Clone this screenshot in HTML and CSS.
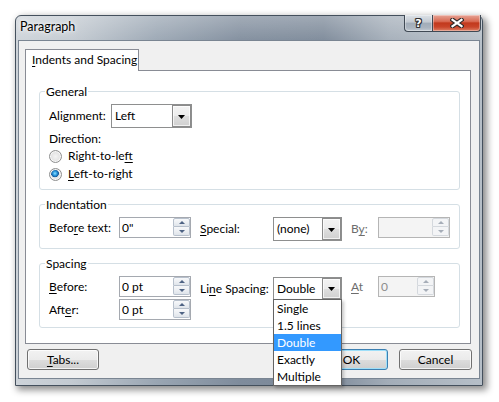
FILE: index.html
```html
<!DOCTYPE html>
<html lang="en">
<head>
<meta charset="utf-8">
<title>Paragraph</title>
<link rel="stylesheet" href="styles.css">
</head>
<body>
<div class="window">
  <div class="titlebar">
    <span class="title">Paragraph</span>
    <div class="caption">
      <div class="cap-btn help"><span class="help-glyph">?</span></div>
      <div class="cap-btn close">
        <svg width="14" height="10" viewBox="0 0 14 10" aria-hidden="true">
          <path d="M2.5 1.8 L11.5 8.2 M11.5 1.8 L2.5 8.2" stroke="#2e2a2a" stroke-width="4.4" stroke-linecap="square" fill="none"/>
          <path d="M2.5 1.8 L11.5 8.2 M11.5 1.8 L2.5 8.2" stroke="#ffffff" stroke-width="2.2" stroke-linecap="square" fill="none"/>
        </svg>
      </div>
    </div>
  </div>
  <div class="client">
    <div class="tabs">
      <div class="tab"><u>I</u>ndents and Spacing</div>
    </div>
    <div class="panel">
      <div class="group general">
        <div class="group-title">General</div>
        <div class="row row-align">
          <span class="lbl lbl-align combo-lbl">Alignment:</span>
          <div class="combo combo-align">
            <span class="combo-value">Left</span>
            <span class="combo-btn"><svg width="7" height="4" viewBox="0 0 7 4"><polygon points="0,0 7,0 3.5,4" fill="#000"/></svg></span>
          </div>
        </div>
        <div class="subhead">Direction:</div>
        <div class="radio-row"><span class="radio"></span><span>Right-to-le<u>f</u>t</span></div>
        <div class="radio-row"><span class="radio checked"></span><span><u>L</u>eft-to-right</span></div>
      </div>

      <div class="group indentation">
        <div class="group-title">Indentation</div>
        <div class="row row-indent">
          <span class="lbl lbl-first spin-lbl">Befo<u>r</u>e text:</span>
          <div class="spin spin-wide">
            <span class="spin-text">0"</span>
            <span class="spin-btns"><span class="sb up"><i></i></span><span class="sb down"><i></i></span></span>
          </div>
          <span class="lbl lbl-mid combo-lbl"><u>S</u>pecial:</span>
          <div class="combo combo-small">
            <span class="combo-value">(none)</span>
            <span class="combo-btn"><svg width="7" height="4" viewBox="0 0 7 4"><polygon points="0,0 7,0 3.5,4" fill="#000"/></svg></span>
          </div>
          <span class="lbl lbl-short combo-lbl disabled">B<u>y</u>:</span>
          <div class="spin spin-wide disabled">
            <span class="spin-text"></span>
            <span class="spin-btns"><span class="sb up"><i></i></span><span class="sb down"><i></i></span></span>
          </div>
        </div>
      </div>

      <div class="group spacing">
        <div class="group-title">Spacing</div>
        <div class="row row-before">
          <span class="lbl lbl-first spin-lbl"><u>B</u>efore:</span>
          <div class="spin spin-wide">
            <span class="spin-text">0 pt</span>
            <span class="spin-btns"><span class="sb up"><i></i></span><span class="sb down"><i></i></span></span>
          </div>
          <span class="lbl lbl-mid combo-lbl ls-lbl">Li<u>n</u>e Spacing:</span>
          <div class="combo combo-small combo-ls">
            <span class="combo-value">Double</span>
            <span class="combo-btn"><svg width="7" height="4" viewBox="0 0 7 4"><polygon points="0,0 7,0 3.5,4" fill="#000"/></svg></span>
            <ul class="dropdown">
              <li>Single</li>
              <li>1.5 lines</li>
              <li class="selected">Double</li>
              <li>Exactly</li>
              <li>Multiple</li>
            </ul>
          </div>
          <span class="lbl lbl-short spin-lbl disabled"><u>A</u>t</span>
          <div class="spin spin-narrow disabled">
            <span class="spin-text">0</span>
            <span class="spin-btns"><span class="sb up"><i></i></span><span class="sb down"><i></i></span></span>
          </div>
        </div>
        <div class="row row-after">
          <span class="lbl lbl-first spin-lbl">Aft<u>e</u>r:</span>
          <div class="spin spin-wide">
            <span class="spin-text">0 pt</span>
            <span class="spin-btns"><span class="sb up"><i></i></span><span class="sb down"><i></i></span></span>
          </div>
        </div>
      </div>
    </div>
    <div class="buttons">
      <div class="btn btn-tabs"><u>T</u>abs...</div>
      <div class="btn btn-ok default">OK</div>
      <div class="btn btn-cancel">Cancel</div>
    </div>
  </div>
</div>
</body>
</html>
```
FILE: styles.css
```css
* { box-sizing: border-box; }
html, body { margin: 0; padding: 0; }
body {
  width: 499px;
  height: 402px;
  overflow: hidden;
  background: #ffffff;
  font-family: "Segoe UI", Lato, "Open Sans", sans-serif;
  font-size: 12px;
  color: #000;
}
u { text-decoration: underline; text-underline-offset: 2px; }

/* window frame */
.window {
  margin: 15px 0 0 15px;
  width: 468px;
  height: 371px;
  border: 1px solid #44505d;
  border-radius: 6px 6px 0 0;
  padding: 0 2px 6px 2px;
  display: flex;
  flex-direction: column;
  background:
    linear-gradient(to bottom, rgba(255,255,255,0.28) 0px, rgba(255,255,255,0.05) 24px, rgba(255,255,255,0) 40px),
    linear-gradient(to right, #cdd3d9 0%, #c3cad1 12%, #9aa6b3 30%, #7f8c9c 48%, #7b8898 66%, #a3adb8 80%, #b6bfc8 100%);
  box-shadow: 3px 3px 7px 1px rgba(0,0,0,0.45);
}
.titlebar {
  height: 24px;
  flex: none;
  display: flex;
  justify-content: space-between;
  align-items: flex-start;
}
.title {
  font-size: 12.5px;
  line-height: 22px;
  padding-left: 2px;
  text-shadow: 0 0 6px #ffffff, 0 0 3px #ffffff;
}
.caption {
  display: flex;
  margin-top: -1px;
  margin-right: -1px;
}
.cap-btn {
  height: 17px;
  border: 1px solid #3f4954;
  border-top: none;
  display: flex;
  align-items: center;
  justify-content: center;
  box-shadow: inset 0 0 0 1px rgba(255,255,255,0.35);
}
.help {
  width: 28px;
  border-right: none;
  border-radius: 0 0 0 4px;
  background: linear-gradient(to bottom, #dde2e7 0%, #c2c9d1 45%, #a1acb8 50%, #aab4bf 80%, #c3cbd3 100%);
}
.help-glyph {
  font-family: "DejaVu Sans", sans-serif;
  font-weight: bold;
  font-size: 11px;
  line-height: 11px;
  color: #fff;
  text-shadow: 1px 0 0 #333, -1px 0 0 #333, 0 1px 0 #333, 0 -1px 0 #333, 1px 1px 0 #333, -1px -1px 0 #333, 1px -1px 0 #333, -1px 1px 0 #333;
}
.close {
  width: 49px;
  border-radius: 0 0 4px 0;
  background: linear-gradient(to bottom, #e7a597 0%, #d86a53 40%, #c2391d 50%, #c9452a 75%, #de8166 100%);
}
.close svg { display: block; }

/* client area */
.client {
  flex: 1;
  border: 1px solid #7a8592;
  background: #f0f0f0;
  padding: 8px 8px 0 6px;
  display: flex;
  flex-direction: column;
}
.tabs { display: flex; height: 21px; flex: none; }
.tab {
  position: relative;
  z-index: 1;
  width: 114px;
  height: 22px;
  border: 1px solid #898c95;
  border-bottom: none;
  background: #fff;
  padding-left: 6px;
  line-height: 20px;
  white-space: nowrap;
}
.panel {
  height: 274px;
  flex: none;
  border: 1px solid #898c95;
  background: #fff;
  padding: 20px 10px 0 13px;
}

/* group boxes */
.group {
  border: 1px solid #d5dfe5;
  border-radius: 3px;
  padding: 0 0 0 9px;
}
.group-title {
  width: max-content;
  margin: -8px 0 0 -4px;
  padding: 0 1px;
  background: #fff;
  line-height: 15px;
}
.general { height: 99px; }
.indentation { margin-top: 14px; height: 45px; }
.spacing { margin-top: 14px; height: 65px; }

.row { display: flex; align-items: flex-start; }
.row-align { margin-top: 5px; height: 24px; }
.row-indent { margin-top: 5px; height: 24px; }
.row-before { margin-top: 5px; height: 23px; }
.row-after { height: 21px; }

.lbl { white-space: nowrap; flex: none; }
.spin-lbl { line-height: 21px; }
.combo-lbl { line-height: 24px; }
.ls-lbl { line-height: 23px; margin-top: 1px; }
.lbl-align { width: 62px; }
.lbl-first { width: 70px; }
.lbl-mid { width: 73px; margin-left: 9px; }
.lbl-short { width: 27px; margin-left: 9px; }
.lbl.disabled { color: #6d6d6d; }

.subhead { margin-top: 3px; line-height: 15px; }
.radio-row {
  display: flex;
  align-items: center;
  height: 18px;
  line-height: 18px;
}
.subhead + .radio-row { margin-top: 1px; }
.radio {
  width: 13px;
  height: 13px;
  border-radius: 50%;
  margin-right: 6px;
  border: 1px solid #8e8f8f;
  background: radial-gradient(circle at 50% 50%, #f4f4f4 0%, #e4e4e4 55%, #d2d2d2 100%);
  box-shadow: inset 0 0 0 1px #f8f8f8;
  flex: none;
}
.radio.checked {
  background:
    radial-gradient(circle at 45% 40%, #8fe1ff 0px, #2b9ae0 2px, #155a9a 3.6px, rgba(0,0,0,0) 4.2px),
    radial-gradient(circle at 50% 50%, #f4f4f4 0%, #e4e4e4 55%, #d2d2d2 100%);
}

/* combo box */
.combo {
  display: flex;
  height: 24px;
  border: 1px solid #8e8f8f;
  background: #fff;
  flex: none;
}
.combo-align { width: 81px; }
.combo-small { width: 69px; }
.combo-ls { height: 23px; margin-top: 1px; position: relative; }
.combo-value { flex: 1; padding-left: 3px; line-height: 22px; white-space: nowrap; }
.combo-ls .combo-value { line-height: 21px; }
.combo-btn {
  width: 19px;
  flex: none;
  border: 1px solid #8b8b8b;
  background: linear-gradient(to bottom, #f3f3f3 0%, #ececec 50%, #dedede 52%, #d0d0d0 100%);
  display: flex;
  align-items: center;
  justify-content: center;
  box-shadow: inset 0 0 0 1px rgba(255,255,255,0.7);
}
.combo-btn svg { display: block; margin-top: 1px; }

/* dropdown list */
.dropdown {
  position: absolute;
  top: 100%;
  left: -1px;
  width: 69px;
  margin: 0;
  padding: 0;
  list-style: none;
  border: 1px solid #646464;
  background: #fff;
  box-shadow: 2px 2px 3px rgba(0,0,0,0.22);
  z-index: 5;
}
.dropdown li {
  height: 17px;
  line-height: 17px;
  padding-left: 3px;
  white-space: nowrap;
}
.dropdown li.selected { background: #3399ff; color: #fff; }

/* spin box */
.spin {
  display: flex;
  height: 21px;
  border: 1px solid #a5a9b0;
  background: #fff;
  flex: none;
}
.spin-wide { width: 72px; }
.spin-narrow { width: 57px; }
.spin-text { flex: 1; padding-left: 2px; line-height: 19px; white-space: nowrap; }
.spin-btns {
  width: 17px;
  display: flex;
  flex-direction: column;
  padding-bottom: 1px;
}
.sb {
  height: 9px;
  border: 1px solid #b7c0cc;
  background: linear-gradient(to bottom, #f7f8fa 0%, #eceff3 50%, #dfe4ea 100%);
  display: flex;
  align-items: center;
  justify-content: center;
}
.sb.up { border-radius: 2px 2px 0 0; }
.sb.down { border-radius: 0 0 2px 2px; border-top: none; height: 9px; }
.sb i {
  display: block;
  width: 0;
  height: 0;
  border-left: 3px solid transparent;
  border-right: 3px solid transparent;
}
.sb.up i { border-bottom: 3px solid #4e6384; }
.sb.down i { border-top: 3px solid #4e6384; }
.spin.disabled { background: #f4f4f4; border-color: #b5b5b5; }
.spin.disabled .spin-text { color: #8d8d8d; }
.spin.disabled .sb { border-color: #d4d8dd; background: #f3f4f6; }
.spin.disabled .sb.up i { border-bottom-color: #a6adb8; }
.spin.disabled .sb.down i { border-top-color: #a6adb8; }

/* buttons */
.buttons {
  display: flex;
  margin-top: 5px;
  padding-left: 2px;
  margin-right: -1px;
}
.btn {
  height: 21px;
  border: 1px solid #707070;
  border-radius: 3px;
  background: linear-gradient(to bottom, #f2f2f2 0%, #ebebeb 50%, #dddddd 51%, #cfcfcf 100%);
  box-shadow: inset 0 0 0 1px rgba(255,255,255,0.75);
  text-align: center;
  line-height: 19px;
  flex: none;
}
.btn-tabs { width: 72px; }
.btn-ok { width: 73px; margin-left: auto; }
.btn-cancel { width: 73px; margin-left: 11px; }
.btn.default {
  border-color: #3c7fb1;
  box-shadow: inset 0 0 0 1px #9edff9;
}
```
